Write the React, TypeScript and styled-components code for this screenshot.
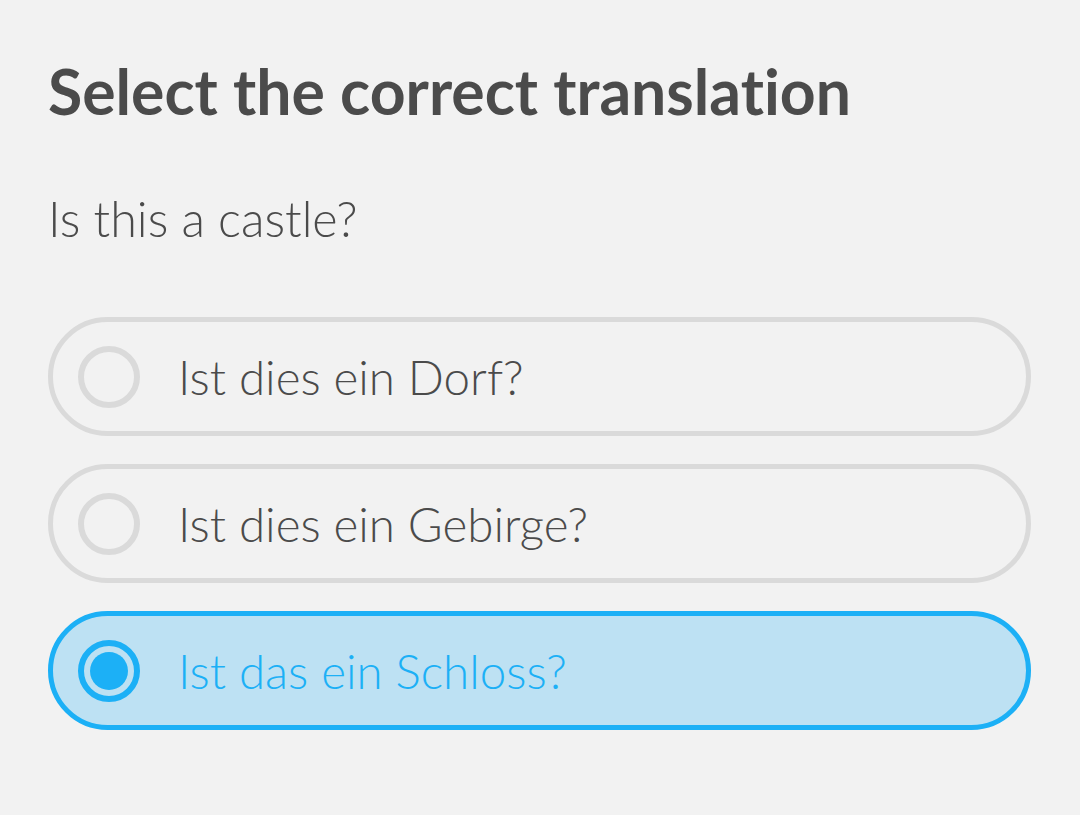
import React, { useState } from 'react'
import styled, { createGlobalStyle } from 'styled-components'

const GlobalStyle = createGlobalStyle`
  html, body {
    margin: 0;
    padding: 0;
    background: #f2f2f2;
  }
  * {
    box-sizing: border-box;
  }
`;

const Wrapper = styled.div`
  width: 1080px;
  height: 815px;
  padding: 46px 49px 0 48px;
  font-family: Lato, "Open Sans", sans-serif;
  font-variant-ligatures: none;
  color: #4b4b4b;
  background: #f2f2f2;
`;

const Title = styled.h1`
  margin: 0;
  font-size: 62.5px;
  line-height: 90px;
  font-weight: 700;
`;

const Prompt = styled.p`
  margin: 52px 0 0;
  font-size: 48.5px;
  line-height: 60px;
  font-weight: 300;
`;

const Options = styled.div`
  display: flex;
  flex-direction: column;
  gap: 28px;
  margin-top: 69px;
`;

const Option = styled.div<{ $selected: boolean }>`
  display: flex;
  align-items: center;
  gap: 38px;
  height: 119px;
  padding: 0 25px;
  border: 5px solid ${(p) => (p.$selected ? '#1cb0f6' : '#dadada')};
  border-radius: 60px;
  background: ${(p) => (p.$selected ? '#bde1f3' : 'transparent')};
  color: ${(p) => (p.$selected ? '#1cb0f6' : '#4b4b4b')};
  font-size: 47.5px;
  font-weight: 300;
  cursor: pointer;
`;

const Radio = styled.span<{ $selected: boolean }>`
  flex: none;
  width: 62px;
  height: 62px;
  border-radius: 50%;
  border: 6px solid ${(p) => (p.$selected ? '#1cb0f6' : '#dadada')};
  display: flex;
  align-items: center;
  justify-content: center;
  &::after {
    content: '';
    display: ${(p) => (p.$selected ? 'block' : 'none')};
    width: 38px;
    height: 38px;
    border-radius: 50%;
    background: #1cb0f6;
  }
`;

const answers = ['Ist dies ein Dorf?', 'Ist dies ein Gebirge?', 'Ist das ein Schloss?'];

export default function App() {
  const [picked, setPicked] = useState(2);
  return (
    <Wrapper>
      <GlobalStyle />
      <Title>Select the correct translation</Title>
      <Prompt>Is this a castle?</Prompt>
      <Options>
        {answers.map((a, i) => (
          <Option key={a} $selected={picked === i} onClick={() => setPicked(i)}>
            <Radio $selected={picked === i} />
            {a}
          </Option>
        ))}
      </Options>
    </Wrapper>
  );
}
